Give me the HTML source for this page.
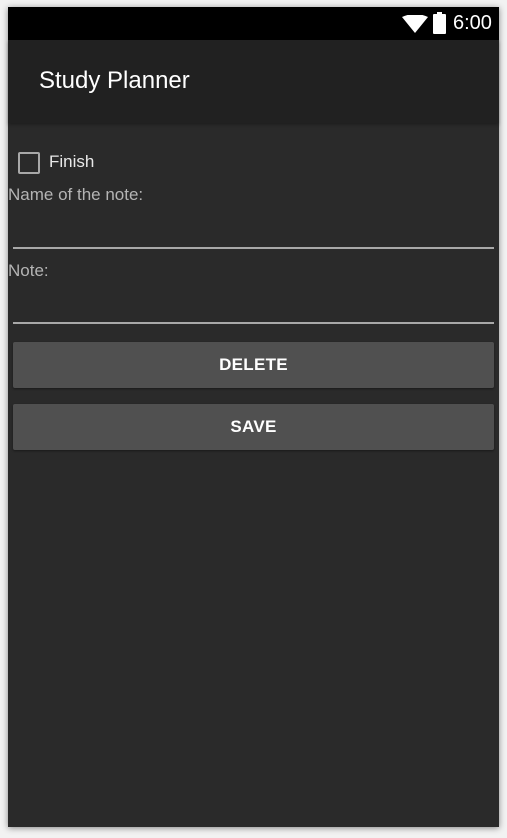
<!DOCTYPE html>
<html><head><meta charset="utf-8"><style>
*{margin:0;padding:0;box-sizing:border-box}
body{width:507px;height:838px;background:#f2f2f2;position:relative;overflow:hidden;font-family:"Liberation Sans",sans-serif}
#dev{position:absolute;left:8px;top:7px;width:491px;height:820px;background:#2a2a2a;box-shadow:0 1px 6px rgba(0,0,0,.45)}
#sb{position:absolute;left:0;top:0;width:491px;height:33px;background:#000}
#ab{position:absolute;left:0;top:33px;width:491px;height:83px;background:#212121;box-shadow:0 2px 3px rgba(0,0,0,.25)}
.a{position:absolute}
.line{position:absolute;left:5px;width:481px;height:2px;background:#a8a8a8}
.btn{position:absolute;left:5px;width:481px;height:46px;background:#505050;border-radius:2px;color:#fff;font-size:17px;text-align:center;line-height:46px;box-shadow:0 1px 2px rgba(0,0,0,.4);font-weight:600;letter-spacing:.3px}
.lbl{position:absolute;left:0;color:#b4b4b4;font-size:17px}
</style></head><body>
<div id="dev">
 <div id="sb">
  <svg class="a" style="left:394px;top:8px" width="26" height="18" viewBox="0 0 26 18"><path d="M0 2 Q13 -4 26 2 L13 18 Z" fill="#fff"/></svg>
  <div class="a" style="left:425px;top:7px;width:13px;height:20px;background:#fff;border-radius:1px"></div>
  <div class="a" style="left:429px;top:5px;width:5px;height:3px;background:#fff"></div>
  <div class="a" style="left:445px;top:5px;color:#fff;font-size:20px">6:00</div>
 </div>
 <div id="ab"><div class="a" style="left:31px;top:27px;color:#fff;font-size:24px">Study Planner</div></div>
 <div class="a" style="left:10px;top:145px;width:22px;height:22px;border:2px solid #a8a8a8;border-radius:2px"></div>
 <div class="a" style="left:41px;top:145px;color:#e8e8e8;font-size:17px">Finish</div>
 <div class="lbl" style="top:178px">Name of the note:</div>
 <div class="line" style="top:240px"></div>
 <div class="lbl" style="top:254px">Note:</div>
 <div class="line" style="top:315px"></div>
 <div class="btn" style="top:335px">DELETE</div>
 <div class="btn" style="top:397px">SAVE</div>
</div>
</body></html>
